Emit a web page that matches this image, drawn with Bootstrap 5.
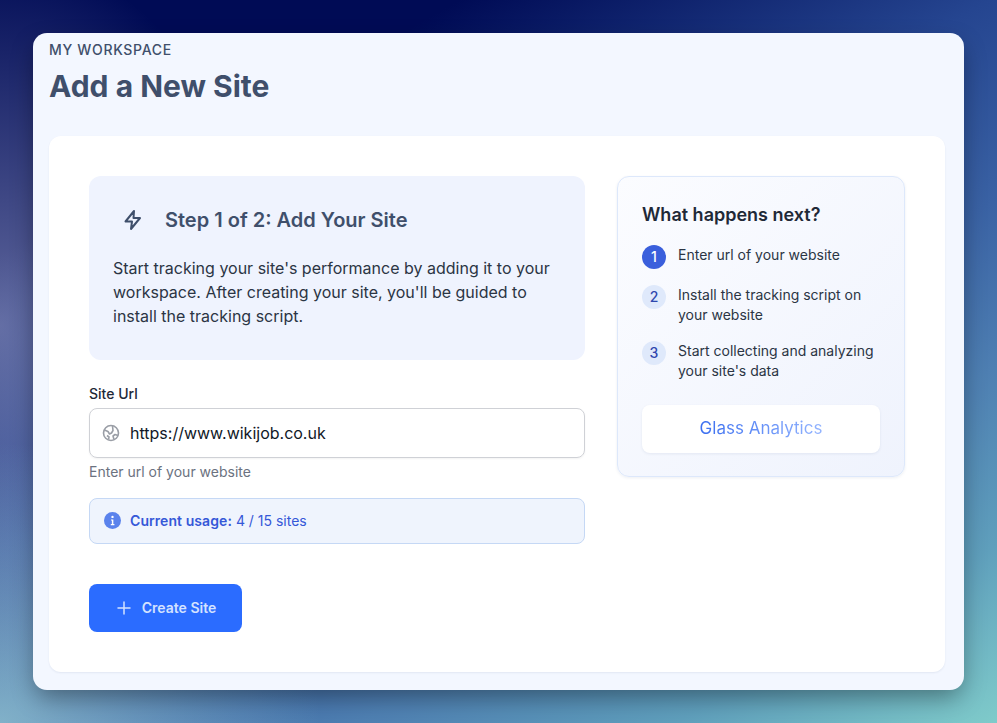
<!DOCTYPE html>
<html lang="en"><head><meta charset="utf-8"><title>Add a New Site</title>
<link href="https://cdn.jsdelivr.net/npm/bootstrap@5.3.0/dist/css/bootstrap.min.css" rel="stylesheet">
<style>
html,body{height:100%}
body{font-family:Inter,"Liberation Sans",sans-serif;color:#1f2937;overflow:hidden;padding:33px;
background:
 radial-gradient(ellipse 320px 280px at 0 100%,rgba(175,228,225,.62),transparent),
 radial-gradient(ellipse 270px 370px at 0 45%,rgba(190,195,230,.5),transparent),
 linear-gradient(151deg,#000b55 20%,#254590 43%,#3a62a4 59%,#4e7fb2 72%,#5f9fbc 86%,#7fcbca 100%)}
.shell{width:931px;height:657px;background:#f3f7ff;border-radius:14px;box-shadow:0 10px 25px -3px rgba(0,0,0,.38);padding:8px 19px 18px 16px}
.crumb{font-size:14px;line-height:17px;font-weight:500;letter-spacing:.7px;color:#3f4f6b}
.page-title{font-size:30px;line-height:36px;font-weight:700;color:#3f4f6b;margin:10px 0 32px}
.panel{background:#fff;border-radius:12px;height:536px;padding:40px;box-shadow:0 1px 2px rgba(30,50,100,.08);gap:32px}
.left-col{width:496px}
.right-col{width:288px}
.step-box{background:#eff3fe;border-radius:12px;height:184px;padding:24px}
.step-head{height:40px;padding-left:8px;gap:20px;margin-bottom:16px;color:#3f4f6b}
.step-title{font-size:20px;font-weight:600;margin:0;color:#3f4f6b}
.step-text{font-size:16px;line-height:24px;color:#2b3544;margin:0}
.url-label{font-size:14px;line-height:20px;font-weight:500;color:#1f2937;margin:24px 0 4px;display:block}
.url-wrap{height:50px;border:1px solid #cfd1d6;border-radius:8px;padding:0 12px;gap:10px;box-shadow:0 1px 2px rgba(0,0,0,.05)}
.url-input{border:0;outline:0;padding:0;flex:1;min-width:0;font-size:16px;color:#111827;font-family:inherit;background:transparent}
.url-help{font-size:14px;line-height:20px;color:#6b7280;margin-top:4px}
.usage{height:46px;margin-top:16px;background:#eff4fd;border:1px solid #c5d8f5;border-radius:8px;padding:0 14px 1px;gap:9px;font-size:14px;color:#3558d8}
.usage b{font-weight:600;letter-spacing:.07px}
.make-btn{margin-top:40px;width:153px;height:48px;background:#2b6cff;border:0;border-radius:8px;color:#d4e2ff;font-size:14px;font-weight:600;gap:11px;padding:0 0 1px 2px}
.next-card{height:301px;background:linear-gradient(135deg,#fbfcff,#eff3fd);border:1px solid #dde8fb;border-radius:12px;padding:24px;box-shadow:0 1px 3px rgba(30,50,100,.08)}
.next-title{font-size:18px;line-height:27px;font-weight:600;color:#1f2937;margin:0 0 17px}
.next-item{gap:12px;font-size:14px;line-height:20px;color:#2b3544;margin-bottom:16px}
.num{flex:0 0 24px;width:24px;height:24px;border-radius:50%;background:#dfe9fb;color:#2f47ae;font-size:14px;font-weight:500;display:flex;align-items:center;justify-content:center}
.num-on{background:#3a5fdc;color:#fff}
.brand{height:48px;margin-top:24px;background:#fff;border-radius:8px;box-shadow:0 1px 3px rgba(30,50,100,.08);font-size:17px;font-weight:400}
.brand span{background:linear-gradient(90deg,#3b6ff0,#93b4ff);-webkit-background-clip:text;background-clip:text;color:transparent}
</style></head>
<body>
<main class="shell">
<div class="crumb">MY WORKSPACE</div>
<h1 class="page-title">Add a New Site</h1>
<div class="panel d-flex">
  <div class="left-col">
    <section class="step-box">
      <div class="step-head d-flex align-items-center">
        <svg width="24" height="24" viewBox="0 0 24 24" fill="none" stroke="#3f4f6b" stroke-width="2" stroke-linejoin="round" stroke-linecap="round"><path d="M13 3 4.5 13.5H11L10 21l9-11h-6.5z"/></svg>
        <h2 class="step-title">Step 1 of 2: Add Your Site</h2>
      </div>
      <p class="step-text">Start tracking your site's performance by adding it to your workspace. After creating your site, you'll be guided to install the tracking script.</p>
    </section>
    <label class="url-label" for="u">Site Url</label>
    <div class="url-wrap d-flex align-items-center">
      <svg width="18" height="18" viewBox="0 0 18 18" fill="none" stroke="#9a9ea6" stroke-width="1.6" stroke-linejoin="round"><circle cx="9" cy="9" r="7.5"/><path d="M2.5 6 6 7.5l1.5 2.5 2-1 1.5-2.5L10.5 2M16 11.5l-3-1-2 1.5 1 3.5M6.5 15.5 7 13l-2-1.5"/></svg>
      <input id="u" class="url-input" value="https://www.wikijob.co.uk">
    </div>
    <div class="url-help">Enter url of your website</div>
    <div class="usage d-flex align-items-center">
      <svg width="17" height="17" viewBox="0 0 16 16"><circle cx="8" cy="8" r="8" fill="#5a82ec"/><circle cx="8" cy="4.6" r="1.1" fill="#fff"/><path d="M6.6 7h2.2v4.4h1v1H6.4v-1h1V8H6.6z" fill="#fff"/></svg>
      <div><b>Current usage:</b> 4 / 15 sites</div>
    </div>
    <button class="btn make-btn d-flex align-items-center justify-content-center" type="button">
      <svg width="14" height="14" viewBox="0 0 14 14" stroke="#d4e2ff" stroke-width="1.5" stroke-linecap="round"><path d="M7 1v12M1 7h12"/></svg>
      Create Site
    </button>
  </div>
  <aside class="right-col">
    <div class="next-card">
      <h3 class="next-title">What happens next?</h3>
      <div class="next-item d-flex"><span class="num num-on">1</span><span>Enter url of your website</span></div>
      <div class="next-item d-flex"><span class="num">2</span><span>Install the tracking script on your website</span></div>
      <div class="next-item d-flex"><span class="num">3</span><span>Start collecting and analyzing your site's data</span></div>
      <div class="brand d-flex align-items-center justify-content-center"><span>Glass Analytics</span></div>
    </div>
  </aside>
</div>
</main>
<script src="https://cdn.jsdelivr.net/npm/bootstrap@5.3.0/dist/js/bootstrap.bundle.min.js"></script>
</body></html>
